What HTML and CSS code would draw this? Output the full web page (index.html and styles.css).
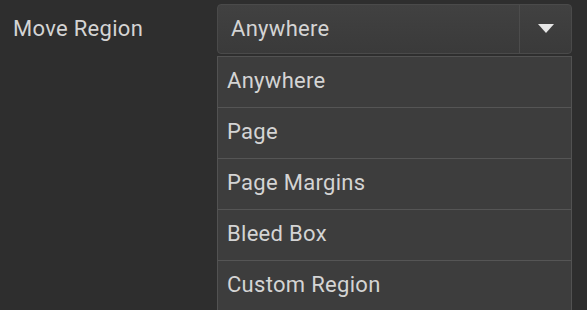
FILE: index.html
```html
<!DOCTYPE html>
<html lang="en">
<head>
    <meta charset="UTF-8">
    <meta name="viewport" content="width=device-width, initial-scale=1.0">
    <title>Move Region</title>
    <link rel="stylesheet" href="styles.css">
</head>
<body>
    <div class="field">
        <label class="field-label">Move Region</label>
        <div class="select-wrap">
            <div class="select">
                <span class="select-value">Anywhere</span>
                <span class="select-button">
                    <svg width="16" height="10" viewBox="0 0 16 10"><polygon points="0,0 16,0 8,9" fill="#e6e6e6"/></svg>
                </span>
            </div>
            <ul class="options">
                <li>Anywhere</li>
                <li>Page</li>
                <li>Page Margins</li>
                <li>Bleed Box</li>
                <li>Custom Region</li>
            </ul>
        </div>
    </div>
</body>
</html>
```

FILE: styles.css
```css
body {
    margin: 0;
    background-color: #2e2e2e;
    font-family: Roboto, "Noto Sans", sans-serif;
    letter-spacing: 0.3px;
    color: #d4d4d4;
    overflow: hidden;
    height: 310px;
}

.field {
    display: flex;
    align-items: flex-start;
    padding-top: 4px;
}

.field-label {
    width: 217px;
    padding-left: 13px;
    box-sizing: border-box;
    font-size: 22px;
    line-height: 50px;
}

.select-wrap {
    width: 355px;
}

.select {
    display: flex;
    height: 50px;
    border: 1px solid #4a4a4a;
    border-radius: 4px;
    box-sizing: border-box;
    background: linear-gradient(#414141, #3a3a3a);
}

.select-value {
    flex: 1;
    padding-left: 13px;
    font-size: 22px;
    line-height: 48px;
    border-right: 1px solid #4c4c4c;
}

.select-button {
    width: 51px;
    display: flex;
    align-items: center;
    justify-content: center;
}

.options {
    list-style: none;
    margin: 2px 0 0;
    padding: 0;
    border: 1px solid #525252;
    border-bottom: none;
    background-color: #3d3d3d;
}

.options li {
    height: 50px;
    line-height: 48px;
    padding-left: 9px;
    font-size: 22px;
    border-bottom: 1px solid #555;
}

.options li:last-child {
    border-bottom: none;
}
```
